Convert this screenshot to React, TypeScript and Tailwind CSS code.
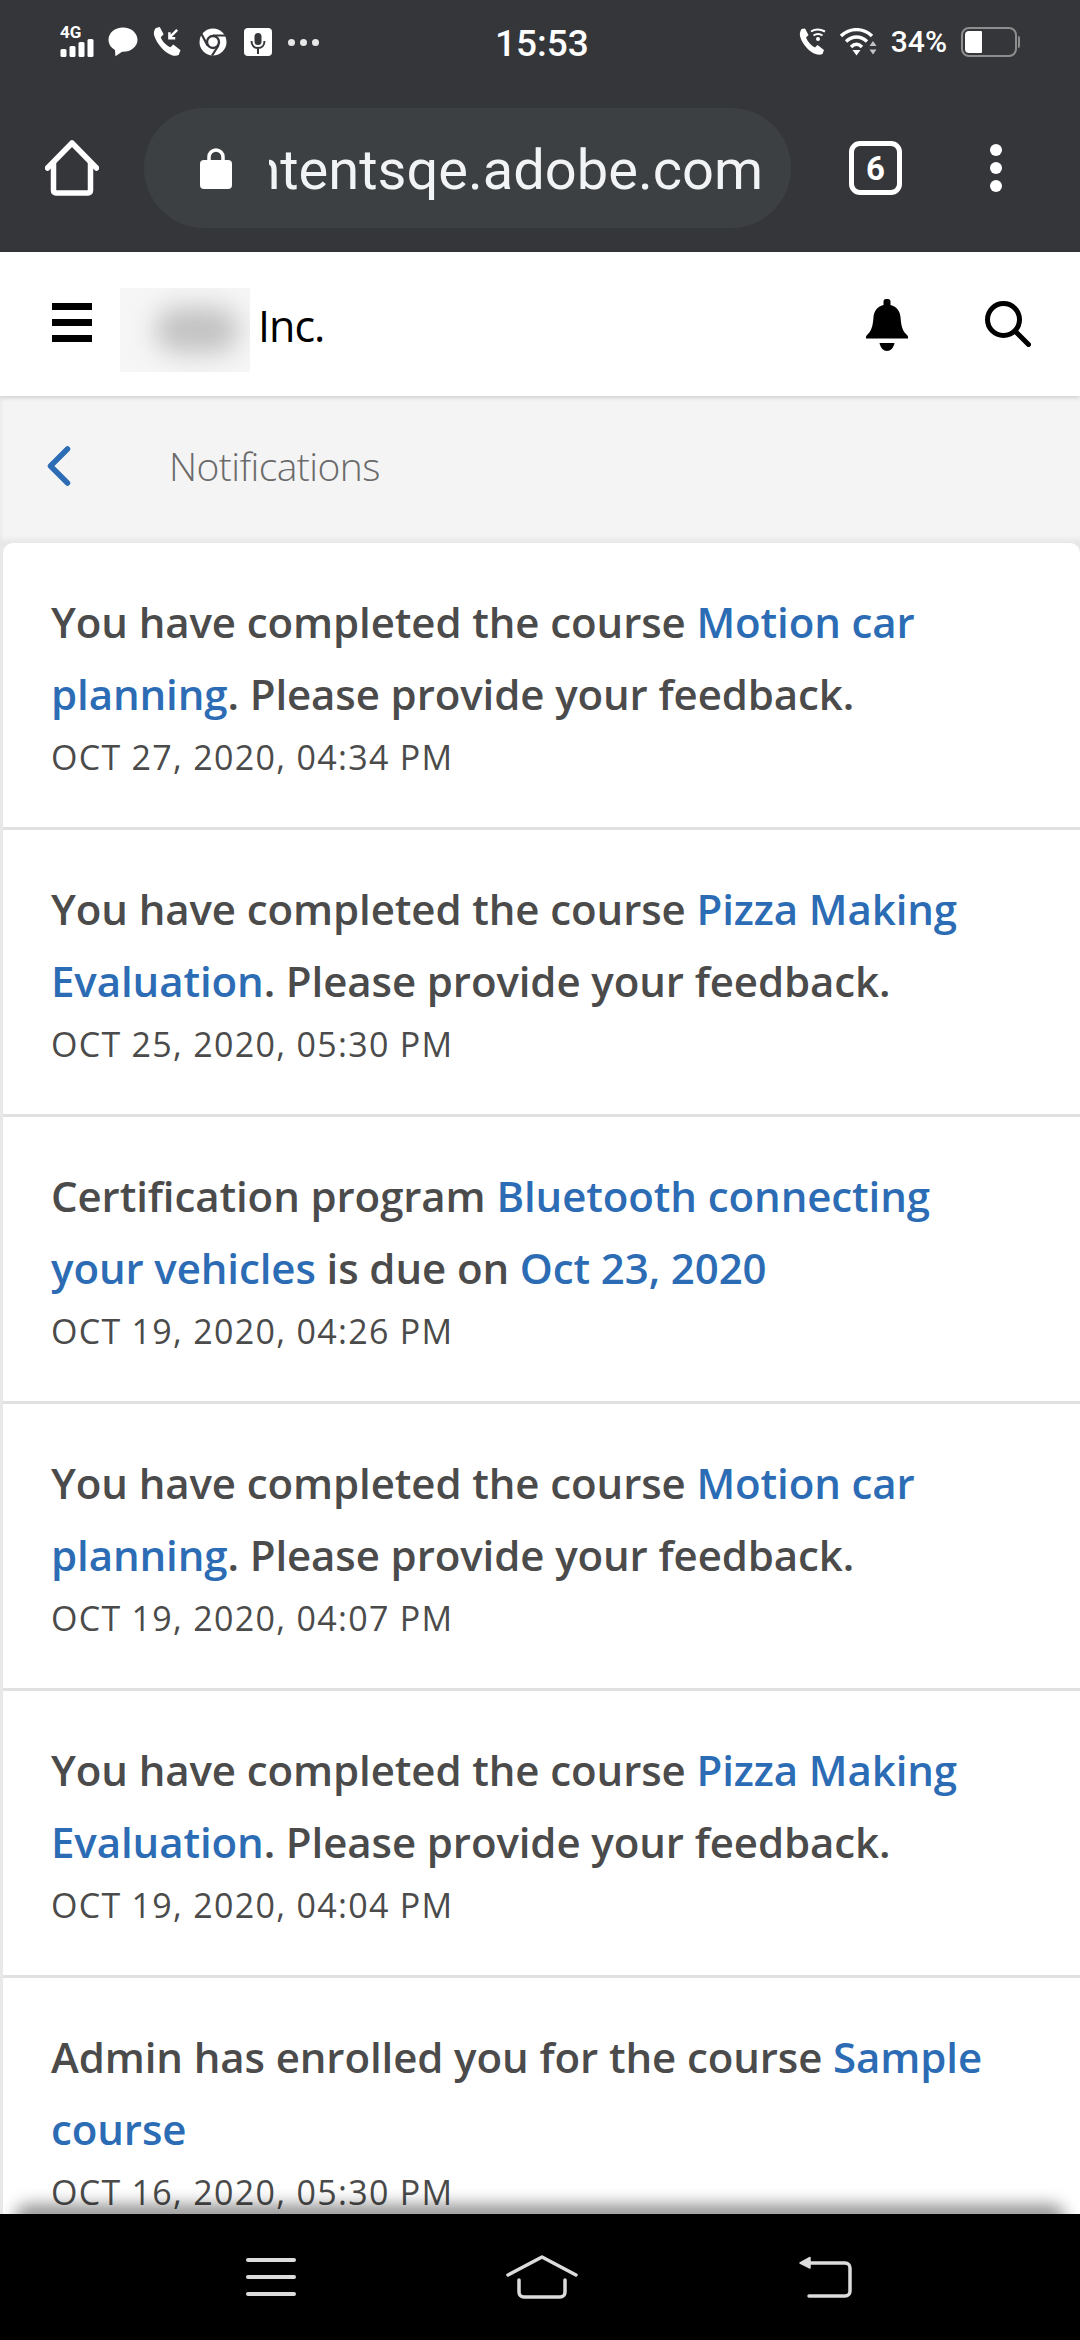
import type { ReactNode } from 'react';

const LINK = 'text-[#2c6cb5]';

function L({ children }: { children: ReactNode }) {
  return <span className={LINK}>{children}</span>;
}

const notifications: Array<{ body: ReactNode; date: string }> = [
  { body: <>You have completed the course <L>Motion car planning</L>. Please provide your feedback.</>, date: 'OCT 27, 2020, 04:34 PM' },
  { body: <>You have completed the course <L>Pizza Making Evaluation</L>. Please provide your feedback.</>, date: 'OCT 25, 2020, 05:30 PM' },
  { body: <>Certification program <L>Bluetooth connecting your vehicles</L> is due on <L>Oct 23, 2020</L></>, date: 'OCT 19, 2020, 04:26 PM' },
  { body: <>You have completed the course <L>Motion car planning</L>. Please provide your feedback.</>, date: 'OCT 19, 2020, 04:07 PM' },
  { body: <>You have completed the course <L>Pizza Making Evaluation</L>. Please provide your feedback.</>, date: 'OCT 19, 2020, 04:04 PM' },
  { body: <>Admin has enrolled you for the course <L>Sample course</L></>, date: 'OCT 16, 2020, 05:30 PM' },
];

function StatusLeft() {
  return (
    <div className="flex items-center">
      <div className="relative h-[32px] w-[35px]">
        <span className="absolute left-0 top-[-3px] font-['Roboto',sans-serif] text-[17px] font-bold leading-[18px] text-white">4G</span>
        <svg viewBox="0 0 34 32" className="h-[32px] w-[35px]" fill="#fff">
          <rect x="0" y="23" width="6" height="8" rx="1.5" />
          <rect x="9" y="20" width="6" height="11" rx="1.5" />
          <rect x="18" y="16" width="6" height="15" rx="1.5" />
          <rect x="27" y="13" width="6" height="18" rx="1.5" />
        </svg>
      </div>
      <svg viewBox="0 0 30 30" className="ml-[13px] h-[30px] w-[30px]" fill="#fff">
        <path d="M15 0.5C6.9 0.5 0.5 5.9 0.5 12.7c0 4.300 2.600 8 6.500 10.200L7.400 29.200l6.700-4.400c.3 0 .6 0 .9 0 8.100 0 14.500-5.400 14.500-12.100S23.100 0.500 15 0.500z" />
      </svg>
      <svg viewBox="0 0 30 32" className="ml-[15px] h-[32px] w-[29px]" fill="none">
        <path d="M3 1.500 7 0.500 11 8 8 11C9.500 15 13.500 19.500 18 21.500L21 18.500 28.500 24.500 26.500 29.500C23 31 19 30 14.500 27 8 22.500 3 15.500 1 8.500 0.500 6 1.500 3 3 1.500Z" fill="#fff" />
        <path d="M25 3.500 17.500 11M17 6V12H23" stroke="#fff" strokeWidth="2.600" />
      </svg>
      <svg viewBox="0 0 28 28" className="ml-[17px] h-[28px] w-[28px]" fill="none">
        <circle cx="14" cy="14" r="13.500" fill="#fff" />
        <circle cx="14" cy="14" r="6" fill="#fff" stroke="#35363a" strokeWidth="2.400" />
        <path d="M14 7.500H27M8.500 17.500 2.500 6M19.500 17.500 13 27.500" stroke="#35363a" strokeWidth="2.200" />
      </svg>
      <svg viewBox="0 0 28 28" className="ml-[17px] h-[28px] w-[28px]">
        <rect width="28" height="28" rx="4" fill="#fff" />
        <rect x="10.500" y="5" width="7" height="12" rx="3.500" fill="#35363a" />
        <path d="M7.500 13c0 4.500 3 7 6.500 7s6.500-2.500 6.500-7M14 20v6" stroke="#35363a" strokeWidth="2" fill="none" />
      </svg>
      <div className="ml-[16px] flex gap-[5px]">
        <span className="h-[7px] w-[7px] rounded-full bg-[#e8e8e8]" />
        <span className="h-[7px] w-[7px] rounded-full bg-[#e8e8e8]" />
        <span className="h-[7px] w-[7px] rounded-full bg-[#e8e8e8]" />
      </div>
    </div>
  );
}

function StatusRight() {
  return (
    <div className="flex items-center">
      <svg viewBox="0 0 27 28" className="h-[28px] w-[27px]" fill="none">
        <path d="M2.500 1 6 0.500 9.500 7 7 9.500C8.500 13.500 12 17.500 16 19.500L18.500 17 25 22 23.500 26C20.500 27.500 16.500 26.500 12.500 24 7 20 2.500 14 1 8 0.500 5.500 1.300 2.500 2.500 1Z" fill="#fff" />
        <path d="M12 3.500C16 .8 21 .8 26 3.500M14.500 7.500C17.500 5.500 20.500 5.500 23.500 7.500" stroke="#fff" strokeWidth="2" />
        <circle cx="19" cy="11" r="2" fill="#fff" />
      </svg>
      <svg viewBox="0 0 37 28" className="ml-[14px] h-[28px] w-[37px]" fill="none">
        <path d="M1 8C10-.5 23-.5 32 8M6 13.500C12.500 7.500 20.500 7.500 27 13.500M11 19C14.500 15.500 18.500 15.500 22 19" stroke="#fff" strokeWidth="3.400" />
        <path d="M12.500 22H20.500L16.500 27.500Z" fill="#fff" />
        <path d="M33 13l3.500 5h-7zM33 26.500l3.500-5h-7z" fill="#c4c4c4" />
      </svg>
      <span className="ml-[14px] font-['Roboto',sans-serif] text-[30px] font-medium leading-none text-white">34%</span>
      <div className="ml-[14px] flex items-center">
        <div className="h-[30px] w-[56px] rounded-[8px] border-[2px] border-[#8e8e8e] p-[2px]">
          <div className="h-full w-[17px] rounded-l-[4px] rounded-r-[1px] bg-white" />
        </div>
        <div className="ml-[1px] h-[12px] w-[2px] rounded-r-full bg-[#8e8e8e]" />
      </div>
    </div>
  );
}

function BrowserBar() {
  return (
    <div className="h-[252px] shrink-0 bg-[#35363a]">
      <div className="relative flex h-[84px] items-center justify-between pl-[60px] pr-[60px]">
        <StatusLeft />
        <span className="absolute left-[495px] top-[23px] font-['Roboto',sans-serif] text-[37px] font-medium leading-[42px] text-white">15:53</span>
        <StatusRight />
      </div>
      <div className="mt-[24px] flex items-center pl-[45px]">
        <svg viewBox="0 0 54 56" className="h-[56px] w-[54px] shrink-0" fill="none" stroke="#fff" strokeWidth="5.500" strokeLinejoin="round" strokeLinecap="round">
          <path d="M2.500 28 27 3 51.500 28" />
          <path d="M8.500 23V50.500C8.500 52 9.500 53 11 53H43C44.500 53 45.500 52 45.500 50.500V23" />
        </svg>
        <div className="ml-[45px] flex h-[120px] w-[647px] shrink-0 items-center rounded-full bg-[#3c4043] pl-[56px]">
          <svg viewBox="0 0 32 42" className="h-[42px] w-[32px] shrink-0" fill="#fff">
            <path d="M9 15V10a7 7 0 0 1 14 0v5" fill="none" stroke="#fff" strokeWidth="3.500" />
            <rect y="13" width="32" height="29" rx="4" />
          </svg>
          <div className="ml-[37px] mt-[4px] w-[494px] overflow-hidden whitespace-nowrap font-['Roboto',sans-serif] text-[56px] leading-[68px] text-[#f1f3f4]" dir="rtl">
            <span dir="ltr">contentsqe.adobe.com</span>
          </div>
        </div>
        <div className="ml-[58px] flex h-[54px] w-[53px] shrink-0 items-center justify-center rounded-[11px] border-[5px] border-white font-['Liberation_Sans_Narrow','Roboto',sans-serif] text-[33px] font-bold leading-none text-white">
          6
        </div>
        <div className="ml-[88px] flex shrink-0 flex-col gap-[6px]">
          <span className="h-[12px] w-[12px] rounded-full bg-white" />
          <span className="h-[12px] w-[12px] rounded-full bg-white" />
          <span className="h-[12px] w-[12px] rounded-full bg-white" />
        </div>
      </div>
    </div>
  );
}

function AppHeader() {
  return (
    <header className="z-10 flex h-[144px] shrink-0 items-center bg-white pl-[52px] pr-[49px] shadow-[0_1px_5px_rgba(0,0,0,0.2)]">
      <div className="mb-[4px] flex w-[40px] flex-col gap-[9px]">
        <span className="h-[7px] bg-black" />
        <span className="h-[7px] bg-black" />
        <span className="h-[7px] bg-black" />
      </div>
      <div className="ml-[28px] mt-[12px] flex h-[84px] w-[130px] items-center justify-center overflow-hidden bg-[#f6f6f6]">
        <div className="ml-[24px] h-[46px] w-[84px] rounded-full bg-[#c2c2c2] blur-[13px]" />
      </div>
      <span className="ml-[8px] mt-[2px] font-['Open_Sans',sans-serif] text-[43px] leading-none tracking-[-1px] text-black">Inc.</span>
      <svg viewBox="0 0 42 52" className="mb-[-2px] ml-auto h-[52px] w-[42px]" fill="#000">
        <path d="M17.500 2.500C17.500 1 18.500 0 20 0h2c1.500 0 2.500 1 2.500 2.500V6C31 7.500 34 12.500 34.500 18c.5 7 1.500 13 5.500 17 1 1 2 2 2 3v1.500H0V38c0-1 1-2 2-3 4-4 5-10 5.500-17C8 12.500 11 7.500 17.500 6z" />
        <path d="M13.500 44h15C27.500 49 24.500 52 21 52s-6.500-3-7.500-8z" />
      </svg>
      <svg viewBox="0 0 46 46" className="ml-[77px] h-[46px] w-[46px]" fill="none" stroke="#000" strokeWidth="5" strokeLinecap="round">
        <circle cx="18.500" cy="18.500" r="16" />
        <path d="M30 30 43.500 43.500" />
      </svg>
    </header>
  );
}

function SubHeader() {
  return (
    <div className="flex h-[147px] shrink-0 items-center bg-[#f4f4f4] pb-[8px] pl-[47px] shadow-[inset_0_-8px_4px_-4px_#e8e8e8,inset_4px_0_3px_-2px_#ebebeb]">
      <svg viewBox="0 0 24 40" className="h-[40px] w-[24px]" fill="none" stroke="#2c6cb5" strokeWidth="5.500" strokeLinecap="round" strokeLinejoin="round">
        <path d="M20.500 3 3.500 20 20.500 37" />
      </svg>
      <span className="ml-[98px] font-['Open_Sans',sans-serif] text-[39px] font-light leading-none tracking-[-0.6px] text-[#6a6a6a]">Notifications</span>
    </div>
  );
}

function NotificationRow({ body, date }: { body: ReactNode; date: string }) {
  return (
    <article className="h-[287px] shrink-0 border-b-[3px] border-[#e1e1e1] pl-[48px] pr-[60px] pt-[43px]">
      <p className="font-['Open_Sans',sans-serif] text-[42px] font-semibold leading-[72px] tracking-[-0.1px] text-[#4b4b4b]">{body}</p>
      <p className="mt-[7px] font-['Open_Sans',sans-serif] text-[34px] leading-[40px] tracking-[1.3px] text-[#4b4b4b]">{date}</p>
    </article>
  );
}

function NavBar() {
  return (
    <nav className="flex h-[126px] shrink-0 items-center bg-black pl-[246px]">
      <div className="flex w-[50px] flex-col gap-[13px]">
        <span className="h-[4px] rounded-full bg-[#dcdcdc]" />
        <span className="h-[4px] rounded-full bg-[#dcdcdc]" />
        <span className="h-[4px] rounded-full bg-[#dcdcdc]" />
      </div>
      <svg viewBox="0 0 72 44" className="ml-[210px] h-[44px] w-[72px]" fill="none" stroke="#dcdcdc" strokeWidth="3.500" strokeLinecap="round" strokeLinejoin="round">
        <path d="M2 20 36 2 70 20" />
        <path d="M13 25V37C13 40 15 42 18 42H54C57 42 59 40 59 37V25" />
      </svg>
      <svg viewBox="0 0 54 42" className="ml-[221px] h-[42px] w-[54px]" fill="none" stroke="#dcdcdc" strokeWidth="3.500" strokeLinecap="round" strokeLinejoin="round">
        <path d="M10 7H46C49 7 51 9 51 12V35C51 38 49 40 46 40H10" />
        <path d="M1 7 11 1.500V12Z" fill="#dcdcdc" strokeWidth="1.500" />
      </svg>
    </nav>
  );
}

export default function App() {
  return (
    <div className="flex h-[2340px] w-[1080px] flex-col overflow-hidden bg-[#e8e8e8]">
      <BrowserBar />
      <AppHeader />
      <SubHeader />
      <main className="relative min-h-0 flex-1 overflow-hidden">
        <div className="ml-[3px] flex flex-col rounded-t-[10px] bg-white">
          {notifications.map((item) => (
            <NotificationRow key={item.date} body={item.body} date={item.date} />
          ))}
        </div>
        <div className="absolute -bottom-[10px] left-[20px] right-[20px] h-[10px] rounded-t-[16px] shadow-[0_-4px_16px_6px_rgba(0,0,0,0.42)]" />
      </main>
      <NavBar />
    </div>
  );
}
